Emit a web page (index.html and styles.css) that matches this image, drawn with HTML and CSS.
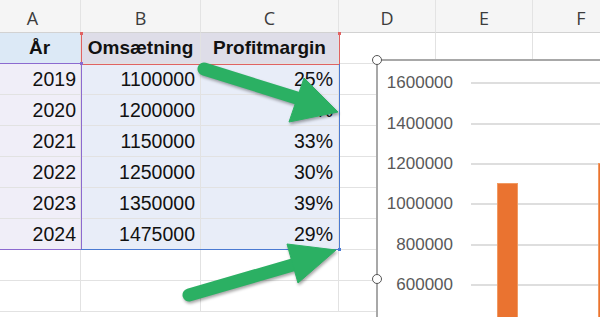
FILE: index.html
```html
<!DOCTYPE html>
<html lang="da">
<head>
  <meta charset="UTF-8">
  <title>Omsætning og profitmargin</title>
  <link rel="stylesheet" href="styles.css">
</head>
<body>

  <div class="wrap">
    <!-- regneark -->
    <div class="sheet">
      <div class="ch">A</div><div class="ch">B</div><div class="ch">C</div><div class="ch">D</div><div class="ch">E</div><div class="ch">F</div>

      <div class="cell hd hd-a">År</div><div class="cell hd hd-bc">Omsætning</div><div class="cell hd hd-bc">Profitmargin</div><div class="cell"></div><div class="cell"></div><div class="cell"></div>

      <div class="cell yr">2019</div><div class="cell val">1100000</div><div class="cell val">25%</div><div class="cell"></div><div class="cell"></div><div class="cell"></div>
      <div class="cell yr">2020</div><div class="cell val">1200000</div><div class="cell val">20%</div><div class="cell"></div><div class="cell"></div><div class="cell"></div>
      <div class="cell yr">2021</div><div class="cell val">1150000</div><div class="cell val">33%</div><div class="cell"></div><div class="cell"></div><div class="cell"></div>
      <div class="cell yr">2022</div><div class="cell val">1250000</div><div class="cell val">30%</div><div class="cell"></div><div class="cell"></div><div class="cell"></div>
      <div class="cell yr">2023</div><div class="cell val">1350000</div><div class="cell val">39%</div><div class="cell"></div><div class="cell"></div><div class="cell"></div>
      <div class="cell yr">2024</div><div class="cell val">1475000</div><div class="cell val">29%</div><div class="cell"></div><div class="cell"></div><div class="cell"></div>

      <div class="cell"></div><div class="cell"></div><div class="cell"></div><div class="cell"></div><div class="cell"></div><div class="cell"></div>
      <div class="cell"></div><div class="cell"></div><div class="cell"></div><div class="cell"></div><div class="cell"></div><div class="cell"></div>
    </div>

    <!-- markerede områder -->
    <div class="range range-purple"></div>
    <div class="range range-red"></div>
    <div class="range range-blue"></div>
    <span class="knob knob-red" style="left:80px;top:32px"></span>
    <span class="knob knob-red" style="left:338px;top:32px"></span>
    <span class="knob knob-purple" style="left:80px;top:62px"></span>
    <span class="knob knob-blue" style="left:338px;top:248px"></span>

    <!-- diagram -->
    <div class="chart">
      <div class="axis">
        <div class="tick"><span>1600000</span><i></i></div>
        <div class="tick"><span>1400000</span><i></i></div>
        <div class="tick"><span>1200000</span><i></i></div>
        <div class="tick"><span>1000000</span><i></i></div>
        <div class="tick"><span>800000</span><i></i></div>
        <div class="tick"><span>600000</span><i></i></div>
      </div>
      <div class="bars">
        <div class="bar" style="height:222px"></div>
        <div class="bar" style="height:242px"></div>
      </div>
      <span class="handle handle-top"></span>
      <span class="handle handle-mid"></span>
    </div>

    <!-- pile -->
    <svg class="arrows" width="600" height="317" viewBox="0 0 600 317">
      <g fill="#2bb063" stroke="#2bb063">
        <line x1="204" y1="69" x2="300" y2="99" stroke-width="13" stroke-linecap="round"/>
        <polygon points="304,78 338,112 289,122" stroke-width="1" stroke-linejoin="round"/>
        <line x1="189" y1="295" x2="296" y2="264" stroke-width="13" stroke-linecap="round"/>
        <polygon points="287,244 336,250 298,283" stroke-width="1" stroke-linejoin="round"/>
      </g>
    </svg>
  </div>

</body>
</html>
```

FILE: styles.css
```css
body {
  margin: 0;
  background: #ffffff;
  font-family: 'Liberation Sans', Arial, sans-serif;
  overflow: hidden;
}

.wrap {
  position: relative;
  width: 600px;
  height: 317px;
  overflow: hidden;
}

.sheet {
  display: grid;
  grid-template-columns: 96px 120px 138px 97px 97px 97px;
  grid-template-rows: 33px repeat(9, 31px);
  margin-left: -15px;
  width: 645px;
}

.ch {
  background: #f5f5f5;
  border-right: 1px solid #e3e3e3;
  border-bottom: 1px solid #d2d2d2;
  box-sizing: border-box;
  color: #3c3c3c;
  font-family: 'Open Sans', sans-serif;
  font-size: 18px;
  text-align: center;
  padding-top: 6px;
}

.cell {
  border-right: 1px solid #e2e2e2;
  border-bottom: 1px solid #e2e2e2;
  box-sizing: border-box;
  font-size: 19.5px;
  color: #111;
  line-height: 30px;
  padding: 0 5px 0 0;
  text-align: right;
  white-space: nowrap;
}

.hd {
  font-weight: bold;
  font-size: 19px;
  text-align: center;
  padding: 0;
}

.hd-a {
  background: #dce9f6;
  padding-left: 14px;
}

.hd-bc {
  background: #dedde8;
}

.yr {
  background: #f0eef8;
  padding-right: 4px;
}

.val {
  background: #e8edf8;
}

/* områder */
.range {
  position: absolute;
  box-sizing: border-box;
}

.range-purple {
  left: -10px;
  top: 63px;
  width: 92px;
  height: 187px;
  border: 1.5px solid #8c6ad0;
}

.range-red {
  left: 81px;
  top: 33px;
  width: 259px;
  height: 32px;
  border: 1.5px solid #e06262;
  border-top: none;
}

.range-blue {
  left: 81px;
  top: 64px;
  width: 259px;
  height: 186px;
  border: 1.5px solid #4a7ad2;
  border-top: none;
  border-left: none;
}

.knob {
  position: absolute;
  width: 3px;
  height: 3px;
}

.knob-red { background: #e06262; }
.knob-purple { background: #8c6ad0; }
.knob-blue { background: #4a7ad2; }

/* diagram */
.chart {
  position: absolute;
  left: 376px;
  top: 59px;
  width: 260px;
  height: 360px;
  background: #ffffff;
  border-top: 2px solid #a8a8a8;
  border-left: 2px solid #a8a8a8;
}

.axis {
  display: flex;
  flex-direction: column;
  padding-top: 2px;
}

.tick {
  display: flex;
  align-items: center;
  height: 40.4px;
}

.tick span {
  width: 75px;
  text-align: right;
  font-size: 17px;
  color: #595959;
}

.tick i {
  flex: 1;
  height: 2px;
  margin-left: 18px;
  background: #dedede;
}

.bars {
  position: absolute;
  left: 119px;
  top: 0;
  height: 344px;
  display: flex;
  align-items: flex-end;
  gap: 80px;
}

.bar {
  width: 21px;
  box-sizing: border-box;
  background: #ea7330;
  border: 1px solid #f19a62;
  border-bottom: none;
}

.handle {
  position: absolute;
  width: 10px;
  height: 10px;
  box-sizing: border-box;
  border-radius: 50%;
  border: 1.5px solid #555;
  background: #fff;
  left: -6px;
}

.handle-top { top: -6px; }
.handle-mid { top: 213px; }

/* pile */
.arrows {
  position: absolute;
  left: 0;
  top: 0;
  pointer-events: none;
  filter: drop-shadow(1px 2px 1.5px rgba(0, 0, 0, 0.35));
}
```
